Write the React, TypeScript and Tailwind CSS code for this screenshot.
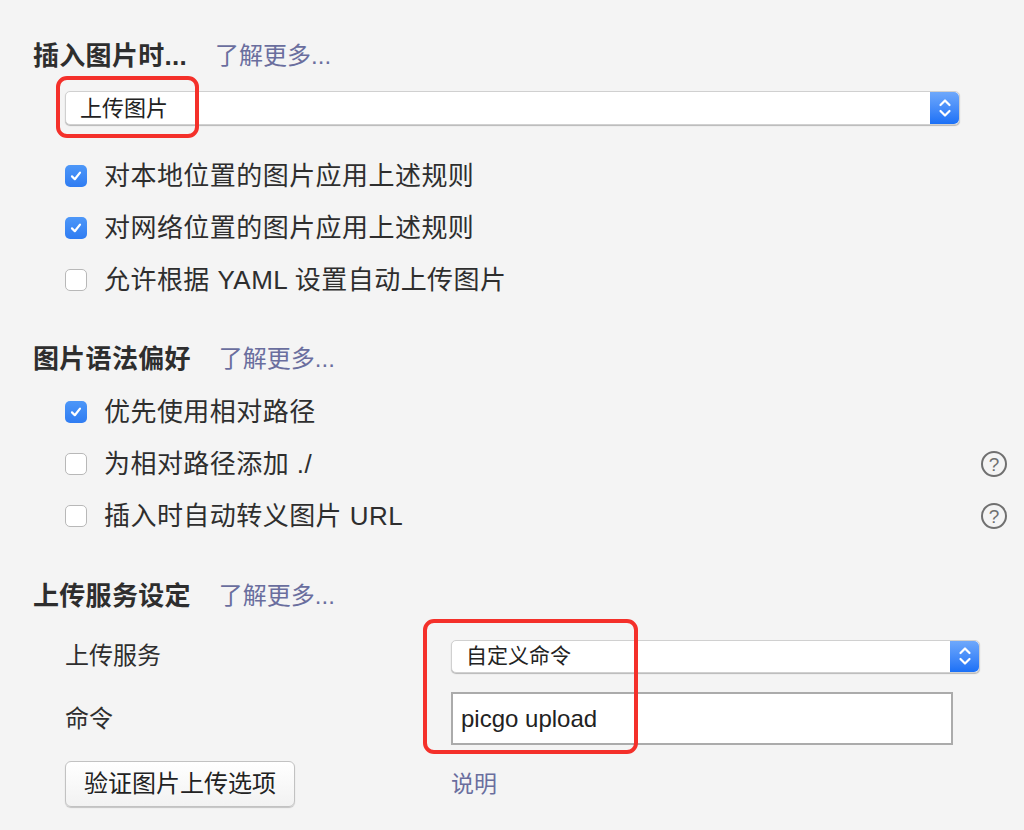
import React from 'react';

const font = "font-['Liberation_Sans','Noto_Sans_CJK_SC',sans-serif]";

function Check({ checked }: { checked: boolean }) {
  if (checked) {
    return (
      <div className="w-[22px] h-[22px] rounded-[5px] bg-gradient-to-b from-[#4d97f8] to-[#2f7cf2] flex items-center justify-center shrink-0">
        <svg width="14" height="14" viewBox="0 0 14 14">
          <path d="M3 7.4 L5.8 10.2 L11 3.6" fill="none" stroke="white" strokeWidth="2.2" strokeLinecap="round" strokeLinejoin="round" />
        </svg>
      </div>
    );
  }
  return <div className="w-[22px] h-[22px] rounded-[5px] bg-white border border-[#b8b8b8] shrink-0" />;
}

function Help() {
  return (
    <div className="w-[26px] h-[26px] rounded-full border-2 border-[#707070] flex items-center justify-center text-[#707070] text-[19px] leading-none">
      ?
    </div>
  );
}

function Row({ checked, label, help }: { checked: boolean; label: string; help?: boolean }) {
  return (
    <div className="h-[52px] flex items-center pl-[32px]">
      <Check checked={checked} />
      <span className="ml-[17px] text-[26px] tracking-[0.45px] text-[#2e2e2e]">{label}</span>
      {help && (
        <div className="ml-auto mr-[17px]">
          <Help />
        </div>
      )}
    </div>
  );
}

function Heading({ title }: { title: string }) {
  return (
    <div className="h-[32px] flex items-center">
      <span className="text-[26px] font-bold tracking-[0.3px] text-[#2e2e2e]">{title}</span>
      <span className="ml-[28px] text-[24px] text-[#6a6e9e]">了解更多...</span>
    </div>
  );
}

function Stepper() {
  return (
    <div className="w-[29px] self-stretch rounded-r-[5px] bg-gradient-to-b from-[#6ea8fb] to-[#1a70f6] flex items-center justify-center">
      <svg width="14" height="22" viewBox="0 0 14 22">
        <path d="M2.5 8 L7 3.5 L11.5 8" fill="none" stroke="white" strokeWidth="2.2" strokeLinecap="round" strokeLinejoin="round" />
        <path d="M2.5 14 L7 18.5 L11.5 14" fill="none" stroke="white" strokeWidth="2.2" strokeLinecap="round" strokeLinejoin="round" />
      </svg>
    </div>
  );
}

function Select({ value, size }: { value: string; size: string }) {
  return (
    <div className="h-full flex items-stretch bg-white rounded-[5px] border border-[#d0d0d0] shadow-[0_1px_1px_rgba(0,0,0,0.25)]">
      <div className={`flex-1 flex items-center pl-[14px] text-[#222] ${size}`}>{value}</div>
      <Stepper />
    </div>
  );
}

export default function App() {
  return (
    <div className={`${font} relative w-[1024px] h-[830px] bg-[#f4f4f4] pl-[33px] pt-[40px] overflow-hidden`}>
      <Heading title="插入图片时..." />
      <div className="mt-[19px] ml-[32px] w-[895px] h-[34px]">
        <Select value="上传图片" size="text-[22px]" />
      </div>
      <div className="mt-[25px]">
        <Row checked label="对本地位置的图片应用上述规则" />
        <Row checked label="对网络位置的图片应用上述规则" />
        <Row checked={false} label="允许根据 YAML 设置自动上传图片" />
      </div>

      <div className="mt-[37px]">
        <Heading title="图片语法偏好" />
      </div>
      <div className="mt-[11px]">
        <Row checked label="优先使用相对路径" />
        <Row checked={false} label="为相对路径添加 ./" help />
        <Row checked={false} label="插入时自动转义图片 URL" help />
      </div>

      <div className="mt-[38px]">
        <Heading title="上传服务设定" />
      </div>
      <div className="mt-[26px] pl-[32px] grid grid-cols-[386px_529px] items-center">
        <span className="text-[24px] text-[#2e2e2e]">上传服务</span>
        <div className="h-[33px]">
          <Select value="自定义命令" size="text-[21px]" />
        </div>
      </div>
      <div className="mt-[18px] pl-[32px] grid grid-cols-[386px_502px] items-center">
        <span className="text-[24px] text-[#2e2e2e]">命令</span>
        <div className="h-[53px] bg-white border-2 border-[#ababab] flex items-center pl-[8px] text-[24px] text-[#222]">
          picgo upload
        </div>
      </div>
      <div className="mt-[16px] pl-[32px] grid grid-cols-[386px_200px] items-center">
        <div>
          <button className="w-[230px] h-[46px] bg-gradient-to-b from-white to-[#f2f2f2] border border-[#c2c2c2] rounded-[6px] shadow-[0_1px_1px_rgba(0,0,0,0.2)] text-[24px] text-[#222]">
            验证图片上传选项
          </button>
        </div>
        <span className="text-[23px] text-[#6a6e9e]">说明</span>
      </div>

      <div className="absolute left-[56px] top-[76px] w-[143px] h-[62px] border-[4px] border-[#f4302a] rounded-[11px]" />
      <div className="absolute left-[423px] top-[619px] w-[215px] h-[135px] border-[4px] border-[#f4302a] rounded-[11px]" />
    </div>
  );
}
